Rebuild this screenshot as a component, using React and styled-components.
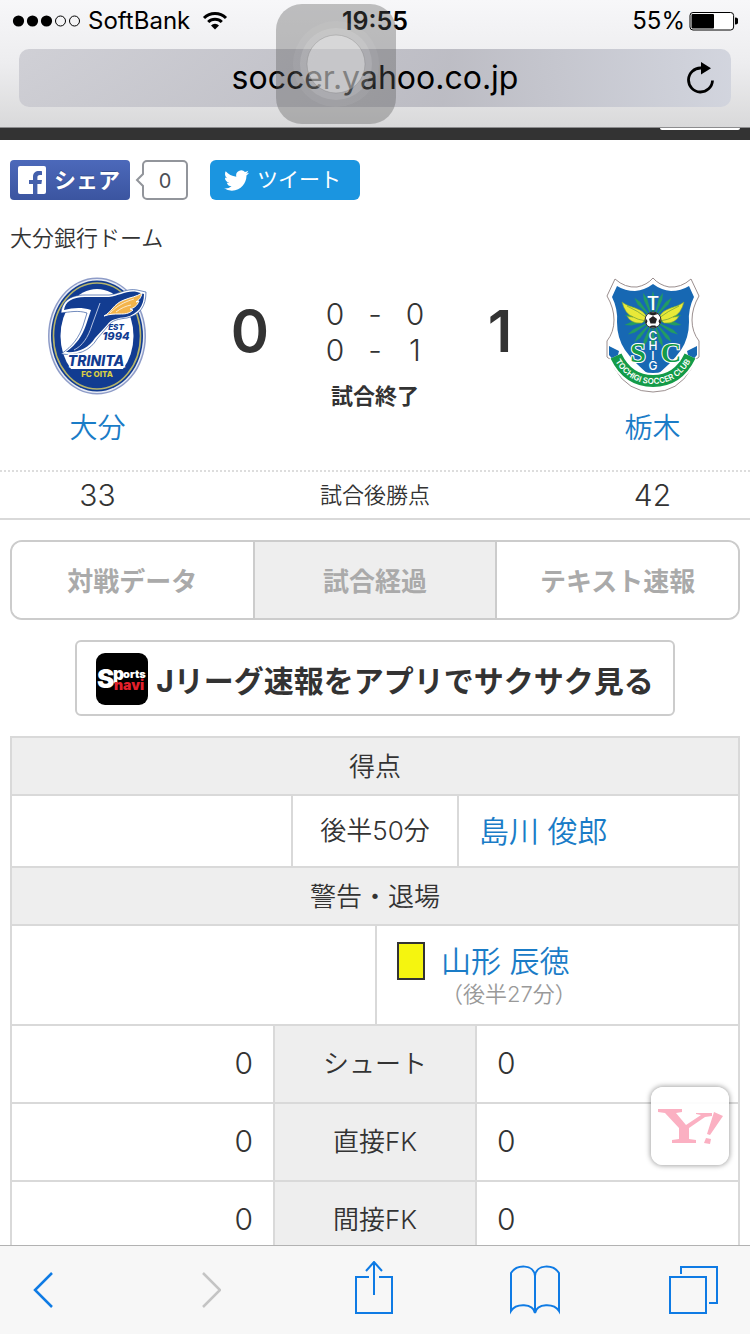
import React from 'react'
import styled, { createGlobalStyle } from 'styled-components'

const GlobalStyle = createGlobalStyle`
  * {
    box-sizing: border-box;
  }

  body {
    margin: 0;
    background: #fff;
    color: #333;
    font-family: Inter, "Noto Sans CJK JP", sans-serif;
    font-weight: 350;
  }

  button {
    padding: 0;
    border: 0;
    background: none;
    color: inherit;
    font: inherit;
    cursor: pointer;
  }

  a {
    color: #1a7cc7;
    text-decoration: none;
  }

  svg {
    display: block;
  }
`

const Screen = styled.div`
  display: flex;
  flex-direction: column;
  height: 100vh;
`

/* browser chrome, top */

const BrowserHeader = styled.header`
  position: relative;
  flex: none;
  padding-bottom: 20px;
  border-bottom: 1px solid #8c8c8e;
  background: linear-gradient(#f7f7f9, #ededef 50%, #d9d9da);
  color: #000;
`

const StatusBar = styled.div`
  display: grid;
  grid-template-columns: 1fr auto 1fr;
  align-items: center;
  height: 41px;
  padding: 0 12px;
  font-size: 24px;
  font-weight: 400;
`

const StatusGroup = styled.div`
  display: flex;
  align-items: center;
  justify-content: ${props => props.$end ? 'flex-end' : 'flex-start'};
  gap: ${props => props.$end ? '4px' : '8px'};
`

const Clock = styled.time`
  font-size: 25px;
  font-weight: 600;
`

const AddressBar = styled.div`
  display: flex;
  align-items: center;
  height: 58px;
  margin: 8px 19px 0;
  padding: 0 16px 0 44px;
  border-radius: 10px;
  background: linear-gradient(100deg, rgba(200, 200, 207, .8), rgba(184, 184, 192, .9) 60%, rgba(208, 211, 221, .9));
`

const Address = styled.input`
  flex: 1;
  min-width: 0;
  padding: 0;
  border: 0;
  outline: 0;
  background: none;
  color: #000;
  font: 400 32px/40px Inter, sans-serif;
  text-align: center;
`

const AssistiveTouch = styled.button`
  && {
    position: absolute;
    top: 4px;
    left: 276px;
    display: grid;
    place-items: center;
    width: 120px;
    height: 120px;
    border-radius: 26px;
    background: rgba(90, 90, 90, .36);
  }
`

/* page */

const Viewport = styled.div`
  position: relative;
  flex: 1;
  min-height: 0;
`

const Page = styled.main`
  height: 100%;
  overflow-y: auto;
  scrollbar-width: none;
`

const SiteBar = styled.div`
  display: flex;
  justify-content: flex-end;
  height: 12px;
  padding-right: 10px;
  background: #333;

  &::after {
    content: '';
    width: 80px;
    height: 2px;
    border-radius: 0 0 4px 4px;
    background: #fff;
  }
`

const ShareRow = styled.div`
  display: flex;
  height: 40px;
  margin: 20px 10px 0;
`

const ShareButton = styled.button`
  && {
    display: flex;
    align-items: center;
    gap: 8px;
    width: ${props => props.$twitter ? '150px' : '120px'};
    padding: 0 ${props => props.$twitter ? '14px' : '8px'};
    border-radius: ${props => props.$twitter ? '6px' : '4px'};
    background: ${props => props.$twitter ? '#1b95e0' : 'linear-gradient(#4c69ba, #3b55a0)'};
    color: #fff;
    font-size: ${props => props.$twitter ? '21px' : '22px'};
    font-weight: ${props => props.$twitter ? 400 : 700};
    text-shadow: ${props => props.$twitter ? 'none' : '0 -1px 0 #354c8c'};
    white-space: nowrap;
  }

  span {
    padding-bottom: 4px;
  }
`

const ShareCount = styled.span`
  display: flex;
  align-items: center;
  margin: 0 22px 0 5px;
  color: #4b4f56;
  font-size: 20px;
  font-weight: 400;

  svg {
    z-index: 1;
    margin-right: -2px;
  }

  span {
    width: 46px;
    height: 40px;
    border: 2px solid #92959b;
    border-radius: 5px;
    line-height: 38px;
    text-align: center;
  }
`

const Venue = styled.p`
  margin: 22px 10px 0;
  font-size: 22px;
  line-height: 32px;
`

const ScoreBoard = styled.section`
  display: grid;
  grid-template-columns: 195fr 110fr 140fr 110fr 195fr;
  padding: 22px 0;
  text-align: center;
`

const Team = styled.a`
  display: flex;
  flex-direction: column;
  align-items: center;
  gap: 12px;
  font-size: 28px;
  line-height: 40px;
`

const Score = styled.strong`
  padding-top: 20px;
  font-size: 58px;
  font-weight: 600;
  line-height: 70px;
`

const Halves = styled.div`
  padding-top: 20px;
  font-size: 30px;
  line-height: 36px;
`

const Half = styled.div`
  display: grid;
  grid-template-columns: repeat(3, 40px);
  justify-content: center;
`

const MatchState = styled.div`
  margin-top: 12px;
  font-size: 22px;
  font-weight: 700;
  line-height: 32px;
`

const PointsRow = styled.section`
  display: grid;
  grid-template-columns: 195fr 360fr 195fr;
  align-items: center;
  height: 50px;
  border-top: 2px dotted #ddd;
  border-bottom: 2px solid #d9d9d9;
  font-size: 30px;
  text-align: center;
`

const PointsLabel = styled.span`
  padding-bottom: 4px;
  font-size: 22px;
`

const Tabs = styled.nav`
  display: flex;
  height: 80px;
  margin: 20px 10px;
  border: 2px solid #ccc;
  border-radius: 12px;
  overflow: hidden;
`

const Tab = styled.button`
  && {
    flex: 1;
    padding-bottom: 2px;
    background: ${props => props.$active ? '#eee' : '#fff'};
    color: #aaa;
    font-size: 26px;
    font-weight: 700;
  }

  & + & {
    border-left: 2px solid #ccc;
  }
`

const AppLink = styled.a`
  display: flex;
  align-items: center;
  justify-content: center;
  gap: 8px;
  height: 76px;
  margin: 0 10%;
  padding-top: 2px;
  border: 2px solid #ccc;
  border-radius: 6px;
  color: #333;
  font-size: 30px;
  font-weight: 700;
  white-space: nowrap;
`

const Record = styled.div`
  margin: 20px 10px;
  border: solid #d9d9d9;
  border-width: 0 2px 2px;
`

const Table = styled.table`
  width: 100%;
  border-spacing: 0;
  table-layout: fixed;
  font-size: 26px;

  caption,
  th,
  td {
    border-top: 2px solid #d9d9d9;
  }

  th,
  td {
    height: ${props => props.$rowHeight};
    padding: 0 20px 4px;
    font-weight: 350;
    text-align: left;
  }

  a {
    font-size: 30px;
  }
`

const Caption = styled.caption`
  height: 58px;
  background: #eee;
  line-height: 58px;
`

const MiddleCell = styled.th`
  && {
    width: ${props => props.$wide ? '204px' : '168px'};
    padding: 0 0 6px;
    border-right: 2px solid #d9d9d9;
    border-left: 2px solid #d9d9d9;
    background: ${props => props.$wide ? '#eee' : '#fff'};
    text-align: center;
  }
`

const CardCell = styled.td`
  && {
    padding-bottom: 0;
  }

  & + & {
    border-left: 2px solid #d9d9d9;
  }
`

const Booking = styled.div`
  display: grid;
  grid-template-columns: 28px 1fr;
  column-gap: 16px;
  align-items: center;
  line-height: 38px;
`

const YellowCard = styled.span`
  height: 38px;
  border: 2px solid #333;
  background: #f5f50f;
`

const BookingTime = styled.small`
  grid-column: 2;
  color: #999;
  font-size: 22px;
  line-height: 28px;
`

const HomeValue = styled.td`
  && {
    padding-bottom: 2px;
    font-size: 30px;
    text-align: right;
  }
`

const AwayValue = styled.td`
  && {
    padding-bottom: 2px;
    font-size: 30px;
  }
`

const YahooButton = styled.button`
  && {
    position: absolute;
    right: 21px;
    bottom: 80px;
    display: grid;
    place-items: center;
    width: 78px;
    height: 78px;
    border-radius: 12px;
    background: rgba(255, 255, 255, .9);
    box-shadow: 0 0 5px 1px rgba(0, 0, 0, .35);
  }
`

/* browser chrome, bottom */

const Toolbar = styled.nav`
  display: grid;
  flex: none;
  grid-template-columns: 168fr 153fr 155fr 159fr auto;
  align-items: center;
  height: 89px;
  padding: 0 30px 0 33px;
  border-top: 1px solid #b2b2b2;
  background: #f7f7f7;
`

const ToolButton = styled.button`
  && {
    justify-self: start;
    color: ${props => props.disabled ? '#c4c4c4' : '#0f7be4'};
  }
`

const strokeProps = { fill: 'none', stroke: 'currentColor', strokeWidth: 2 }

const Signal = () => (
  <svg width="68" height="12" viewBox="0 0 68 12" aria-label="signal">
    {[6, 20, 34].map(x => <circle key={x} cx={x + .5} cy="6" r="5.6" />)}
    {[48, 62].map(x => <circle key={x} cx={x + .5} cy="6" r="5" fill="none" stroke="#000" />)}
  </svg>
)

const Wifi = () => (
  <svg width="34" height="19" viewBox="-4 0 34 19" aria-label="wifi">
    <path d="M2 7a15.500 15.500 0 0 1 22 0M6.200 11a9.600 9.600 0 0 1 13.600 0" fill="none" stroke="#000" strokeWidth="3" />
    <path d="M13 18.500l-4-4a5.600 5.600 0 0 1 8 0z" />
  </svg>
)

const Battery = () => (
  <svg width="49" height="20" viewBox="0 0 49 20" aria-label="battery">
    <rect x="1" y="1.500" width="43.600" height="17.500" rx="3" fill="#fff" stroke="#000" />
    <rect x="2.500" y="3" width="22.500" height="14.500" rx="1" />
    <path d="M46 6.500a3.500 3.500 0 0 1 0 7z" />
  </svg>
)

const Reload = () => (
  <svg width="28" height="32" viewBox="0 0 28 32">
    <path d="M25.500 18.500A12 12 0 1 1 14 6" fill="none" stroke="#000" strokeWidth="2.800" />
    <path d="M14 0l10 6.200-10 6.200z" />
  </svg>
)

const TouchRings = () => (
  <svg width="86" height="86" viewBox="0 0 86 86">
    <circle cx="43" cy="43" r="43" fill="#fff" fillOpacity=".06" />
    <circle cx="43" cy="43" r="36" fill="#fff" fillOpacity=".12" />
    <circle cx="43" cy="43" r="29" fill="#fff" fillOpacity=".32" stroke="#777" strokeOpacity=".3" />
  </svg>
)

const FacebookLogo = () => (
  <svg width="28" height="28" viewBox="0 0 28 28">
    <rect width="28" height="28" rx="2" fill="#fff" />
    <path d="M15 28V18h-4v-4h4v-3c0-4.200 2.500-6 6-6 1.500 0 2.500.1 3 .2V9h-2c-2 0-2.600.9-2.600 2.400V14H24l-.6 4h-4v10z" fill="#4460ac" />
  </svg>
)

const TwitterBird = () => (
  <svg width="25" height="25" viewBox="0 0 24 24">
    <path fill="#fff" d="M23.950 4.570a10 10 0 0 1-2.820.77 4.960 4.960 0 0 0 2.160-2.720c-.95.550-2 .95-3.130 1.180a4.920 4.920 0 0 0-8.380 4.480C7.690 8.090 4.070 6.130 1.640 3.160a4.820 4.820 0 0 0-.67 2.480c0 1.710.87 3.210 2.190 4.100a4.900 4.900 0 0 1-2.230-.62v.06a4.920 4.920 0 0 0 3.950 4.830 5 5 0 0 1-2.210.08 4.940 4.940 0 0 0 4.600 3.420A9.870 9.870 0 0 1 0 19.540a13.990 13.990 0 0 0 7.560 2.210c9.050 0 14-7.500 14-13.980 0-.21 0-.42-.02-.63a9.940 9.940 0 0 0 2.460-2.550z" />
  </svg>
)

const OitaCrest = () => (
  <svg width="104" height="120" viewBox="-1 0 104 120" aria-hidden="true">
    <ellipse cx="50" cy="60" rx="49" ry="58.500" fill="#8e9cc8" />
    <ellipse cx="50" cy="60" rx="47.500" ry="57" fill="#e8ecf5" />
    <ellipse cx="50" cy="60" rx="46" ry="55.500" fill="#123c91" />
    <ellipse cx="50" cy="60" rx="43.500" ry="53" fill="none" stroke="#b5b46a" strokeWidth="1.600" />
    <ellipse cx="50" cy="60" rx="36.500" ry="47" fill="#fff" />
    <path d="M22 93h56q-9 16-28 16T22 93z" fill="#123c91" />
    <path d="M14 37C15 26 22 19 38 19h24c10-1 18-7 28-5l9 2c0 14-6 23-19 26-8 1-15 2-19 8L50 63C43 75 30 80 14 78c12-8 18-17 22-28l4-13c-9-3-17-1-26 0z" fill="#fff" stroke="#123c91" strokeWidth=".6" />
    <path d="M17 34C18 26 25 21 38 21h24c10-1 18-7 28-5l7 2c0 12-6 20-18 23-8 1-15 2-19 8L48 62C42 72 31 77 19 76c11-8 16-16 20-27l5-15c-10-3-18-2-27 0z" fill="#123c91" />
    <path d="M53 27l-8 22C41 62 35 70 27 74" fill="none" stroke="#b5c2df" />
    <path d="M57 40c8-4 9-12 20-16 7-3 12-3 18-7-1 5-3 7-6 9l3-1c-2 5-5 7-9 8l3 1c-4 4-9 4-13 4-6 0-10 0-16 2z" fill="#f3b44b" stroke="#fff" />
    <path d="M63 37c7-7 14-11 24-14M69 36c5-4 10-6 15-7" stroke="#fff" fill="none" strokeWidth=".7" />
    <g fill="#123c91" fontFamily="Inter, sans-serif" fontStyle="italic" fontWeight="800" textAnchor="middle">
      <text x="69" y="54" fontSize="8">EST</text>
      <text x="69" y="64" fontSize="11">1994</text>
      <text x="49" y="90" fontSize="14" stroke="#fff" strokeWidth="3" paintOrder="stroke">TRINITA</text>
    </g>
    <text x="50" y="101" fill="#d9cf45" fontFamily="Inter, sans-serif" fontSize="8" fontWeight="800" textAnchor="middle">FC OITA</text>
  </svg>
)

const rays = [20, 40, 60, 80, 100, 120, 140, 160, 180, 200, 220, 240, 260, 280, 300, 320, 340, 360]

const TochigiCrest = () => (
  <svg width="98" height="120" viewBox="0 0 98 120" aria-hidden="true">
    <path d="M49 2q6 7 16 9 12 1 22-8l8 17q-7 12-7 24 0 12 7 21v16l-4 3-4 9q-13 23-38 23T11 93l-4-9-4-3V65q7-9 7-21Q10 32 3 20l8-17q10 9 22 8 10-2 16-9z" fill="#fff" stroke="#9b8f8f" />
    <path d="M49 8q8 6 18 7 10 0 18-5l5 11q-6 12-5 25 0 16-8 28-9 13-28 28-19-15-28-28-8-12-8-28 1-13-5-25l5-11q8 5 18 5 10-1 18-7z" fill="#1768b3" />
    {rays.map(a => (
      <path key={a} d="M49 44l-1.800-22 1.800-7 1.800 7z" fill="#239b63" transform={`rotate(${a} 49 44)`} />
    ))}
    <path d="M43 42C39 31 27 33 18 26q3 12 11 15-3 0-6-1 4 8 15 7zM55 42c4-11 16-9 25-16q-3 12-11 15 3 0 6-1-4 8-15 7z" fill="#e9e938" stroke="#78a53d" strokeWidth=".6" />
    <path d="M43 42q-9-7-20-12M42 45q-8-1-15-5M55 42q9-7 20-12M56 45q8-1 15-5" fill="none" stroke="#79a63a" strokeWidth=".8" />
    <path d="M5 70l10 5-3 12-7-8zM93 70l-10 5 3 12 7-8z" fill="#1768b3" />
    <path d="M12 80Q24 105 49 105T86 80" fill="none" stroke="#fff" strokeWidth="16" />
    <path d="M12 80Q24 105 49 105T86 80" fill="none" stroke="#149b48" strokeWidth="12" />
    <circle cx="49" cy="44" r="8" fill="#fff" stroke="#333" />
    <path d="M49 40l4 3-1.500 4.500h-5L45 43zM44 38l3-1.500h4l3 1.500-5 1.500zM41.500 42l2 3-1 3-1-2zM56.500 42l-2 3 1 3 1-2zM45 50.500l3-1h3l2 1-4 1z" fill="#222" />
    <g fill="#149b48" stroke="#fff" strokeWidth="2" paintOrder="stroke" fontFamily="Liberation Serif, serif" fontWeight="700" fontSize="28" textAnchor="middle">
      <text x="34" y="86">S</text>
      <text x="67" y="86">C</text>
    </g>
    <g fill="#fff" fontFamily="Inter, sans-serif" fontWeight="500" fontSize="12" textAnchor="middle">
      <text x="49" y="34" fontSize="19">T</text>
      <text x="49" y="64">C</text>
      <text x="49" y="74">H</text>
      <text x="49" y="84">I</text>
      <text x="49" y="94">G</text>
    </g>
    <path id="ribbon" d="M10 83Q24 108 49 108T88 83" fill="none" />
    <text fill="#fff" fontFamily="Inter, sans-serif" fontSize="8" fontWeight="600" textAnchor="middle">
      <textPath href="#ribbon" startOffset="50%">TOCHIGI SOCCER CLUB</textPath>
    </text>
  </svg>
)

const SportsNaviIcon = () => (
  <svg width="52" height="52" viewBox="0 0 52 52" aria-hidden="true">
    <rect width="52" height="52" rx="9" />
    <g fontFamily="Inter, sans-serif" fontWeight="900">
      <text x="1" y="35" fontSize="26" fill="#fff">S</text>
      <text x="17" y="27" fontSize="17" fill="#fff">p</text>
      <text x="27" y="25" fontSize="11" fill="#fff">orts</text>
      <text x="18" y="37" fontSize="14" fill="#e3202b">navi</text>
    </g>
  </svg>
)

const YahooMark = () => (
  <svg width="68" height="40" viewBox="0 0 68 40">
    <path d="M2 3h24v3l-6 1 10 12 15-10-5-1V7h16v3l-7 1-16 11v11l7 1v3H16v-3l7-1V22L9 7 2 6zM58 6l9 4-13 19-3-1zM50 32l5 1-1 5-6-1z" fill="#fbb0c2" />
  </svg>
)

const stats = [
  { label: 'シュート', home: 0, away: 0 },
  { label: '直接FK', home: 0, away: 0 },
  { label: '間接FK', home: 0, away: 0 },
]

const App = () => {
  return (
    <Screen>
      <GlobalStyle />

      <BrowserHeader>
        <StatusBar>
          <StatusGroup><Signal />SoftBank<Wifi /></StatusGroup>
          <Clock>19:55</Clock>
          <StatusGroup $end>55%<Battery /></StatusGroup>
        </StatusBar>
        <AddressBar>
          <Address aria-label="Address" defaultValue="soccer.yahoo.co.jp" />
          <button aria-label="Reload"><Reload /></button>
        </AddressBar>
        <AssistiveTouch aria-label="AssistiveTouch"><TouchRings /></AssistiveTouch>
      </BrowserHeader>

      <Viewport>
        <Page>
          <SiteBar />

          <ShareRow>
            <ShareButton><FacebookLogo /><span>シェア</span></ShareButton>
            <ShareCount>
              <svg width="9" height="16" viewBox="0 0 9 16">
                <path d="M9 1L2 8l7 7" fill="#fff" stroke="#92959b" strokeWidth="2" />
              </svg>
              <span>0</span>
            </ShareCount>
            <ShareButton $twitter><TwitterBird /><span>ツイート</span></ShareButton>
          </ShareRow>

          <Venue>大分銀行ドーム</Venue>

          <ScoreBoard>
            <Team href="#oita"><OitaCrest />大分</Team>
            <Score>0</Score>
            <Halves>
              <Half><span>0</span><span>-</span><span>0</span></Half>
              <Half><span>0</span><span>-</span><span>1</span></Half>
              <MatchState>試合終了</MatchState>
            </Halves>
            <Score>1</Score>
            <Team href="#tochigi"><TochigiCrest />栃木</Team>
          </ScoreBoard>

          <PointsRow>
            <span>33</span>
            <PointsLabel>試合後勝点</PointsLabel>
            <span>42</span>
          </PointsRow>

          <Tabs>
            <Tab>対戦データ</Tab>
            <Tab $active>試合経過</Tab>
            <Tab>テキスト速報</Tab>
          </Tabs>

          <AppLink href="#app"><SportsNaviIcon />Jリーグ速報をアプリでサクサク見る</AppLink>

          <Record>
            <Table $rowHeight="72px">
              <Caption>得点</Caption>
              <tbody>
                <tr>
                  <td />
                  <MiddleCell scope="row">後半50分</MiddleCell>
                  <td><a href="#shimakawa">島川 俊郎</a></td>
                </tr>
              </tbody>
            </Table>

            <Table $rowHeight="100px">
              <Caption>警告・退場</Caption>
              <tbody>
                <tr>
                  <CardCell />
                  <CardCell>
                    <Booking>
                      <YellowCard />
                      <a href="#yamagata">山形 辰徳</a>
                      <BookingTime>（後半27分）</BookingTime>
                    </Booking>
                  </CardCell>
                </tr>
              </tbody>
            </Table>

            <Table $rowHeight="78px">
              <tbody>
                {stats.map(({ label, home, away }) => (
                  <tr key={label}>
                    <HomeValue>{home}</HomeValue>
                    <MiddleCell scope="row" $wide>{label}</MiddleCell>
                    <AwayValue>{away}</AwayValue>
                  </tr>
                ))}
              </tbody>
            </Table>
          </Record>
        </Page>

        <YahooButton aria-label="Yahoo! JAPAN"><YahooMark /></YahooButton>
      </Viewport>

      <Toolbar>
        <ToolButton aria-label="Back">
          <svg width="20" height="36" viewBox="0 0 20 36" {...strokeProps}>
            <path d="M19 1L2 18l17 17" strokeWidth="2.500" />
          </svg>
        </ToolButton>
        <ToolButton aria-label="Forward" disabled>
          <svg width="20" height="36" viewBox="0 0 20 36" {...strokeProps}>
            <path d="M2 1l17 17L2 35" strokeWidth="2.500" />
          </svg>
        </ToolButton>
        <ToolButton aria-label="Share">
          <svg width="40" height="58" viewBox="0 0 40 58" {...strokeProps}>
            <path d="M15 16H2v36h36V16H25M20 34V2M12 10l8-9 8 9" />
          </svg>
        </ToolButton>
        <ToolButton aria-label="Bookmarks">
          <svg width="52" height="50" viewBox="0 0 52 50" {...strokeProps}>
            <path d="M26 48C24 38 7 38 2 46V8c6-9 23-9 24 3 1-12 18-12 24-3v38c-5-8-22-8-24 2zM26 11v37" />
          </svg>
        </ToolButton>
        <ToolButton aria-label="Tabs">
          <svg width="52" height="50" viewBox="0 0 52 50" {...strokeProps}>
            <path d="M2 12h36v36H2zM13 9V2h36v36h-8" />
          </svg>
        </ToolButton>
      </Toolbar>
    </Screen>
  )
}

export default App
